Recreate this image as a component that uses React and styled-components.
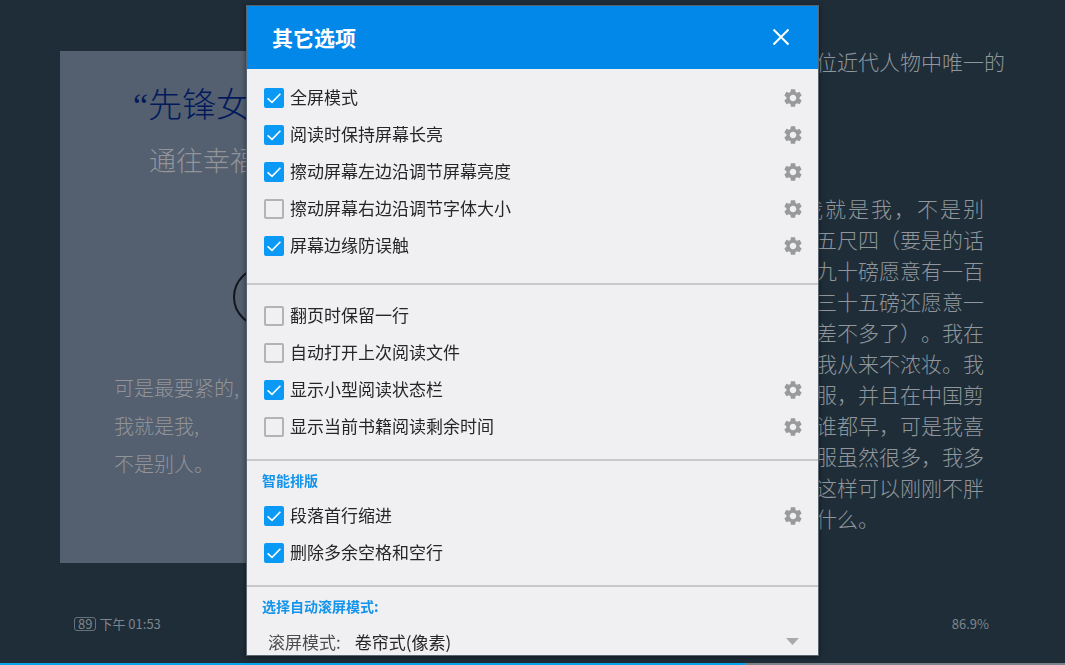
import { useState } from 'react';
import styled, { createGlobalStyle } from 'styled-components';
import { MdSettings } from 'react-icons/md';

const groups = [
    {
        top: 10,
        bottom: 19,
        options: [
            { id: 'fullscreen', label: '全屏模式', on: true, gear: true },
            { id: 'keepAwake', label: '阅读时保持屏幕长亮', on: true, gear: true },
            { id: 'leftEdge', label: '擦动屏幕左边沿调节屏幕亮度', on: true, gear: true },
            { id: 'rightEdge', label: '擦动屏幕右边沿调节字体大小', on: false, gear: true },
            { id: 'edgeGuard', label: '屏幕边缘防误触', on: true, gear: true },
        ],
    },
    {
        top: 12,
        bottom: 14,
        options: [
            { id: 'keepLine', label: '翻页时保留一行', on: false },
            { id: 'openLast', label: '自动打开上次阅读文件', on: false },
            { id: 'statusBar', label: '显示小型阅读状态栏', on: true, gear: true },
            { id: 'timeLeft', label: '显示当前书籍阅读剩余时间', on: false, gear: true },
        ],
    },
    {
        title: '智能排版',
        top: 9,
        bottom: 14,
        options: [
            { id: 'indent', label: '段落首行缩进', on: true, gear: true },
            { id: 'trim', label: '删除多余空格和空行', on: true },
        ],
    },
];

const paragraph = [
    '五尺四（要是的话',
    '九十磅愿意有一百',
    '三十五磅还愿意一',
    '差不多了）。我在',
    '我从来不浓妆。我',
    '服，并且在中国剪',
    '谁都早，可是我喜',
    '服虽然很多，我多',
    '这样可以刚刚不胖',
];

const Option = ({ id, label, on, gear }) => {
    const [checked, setChecked] = useState(on);

    return (
        <Row>
            <Label htmlFor={id}>
                <CheckWrap>
                    <Checkbox id={id} type="checkbox" checked={checked} onChange={ev => setChecked(ev.target.checked)} />
                    {checked && (
                        <CheckMark viewBox="0 0 20 20" aria-hidden="true">
                            <path d="M3.6 10.4 8 14.4 16.4 5.8" />
                        </CheckMark>
                    )}
                </CheckWrap>
                <LabelText>{label}</LabelText>
            </Label>
            {gear && (
                <GearButton type="button" aria-label={`${label}设置`}>
                    <MdSettings size={22} />
                </GearButton>
            )}
        </Row>
    )
}

const App = () => {
    return (
        <>
            <GlobalStyle />
            <Reader>
                <Pages>
                    <Cover>
                        <CoverTitle>“先锋女</CoverTitle>
                        <CoverSubtitle>通往幸福</CoverSubtitle>
                        <Ring />
                        <Quote>
                            可是最要紧的,<br />
                            我就是我,<br />
                            不是别人。
                        </Quote>
                    </Cover>
                    <TextPage>
                        <Lead>位近代人物中唯一的</Lead>
                        <Paragraph>
                            <Line $width={182}>我就是我，不是别</Line>
                            {paragraph.map(line => <Line key={line} $width={168}>{line}</Line>)}
                            <Line $width={168} $last>什么。</Line>
                        </Paragraph>
                    </TextPage>
                </Pages>
                <StatusBar>
                    <Clock><Battery>89</Battery>下午 01:53</Clock>
                    <span>86.9%</span>
                </StatusBar>
                <Progress role="progressbar" aria-label="进度" aria-valuenow={70} aria-valuemin={0} aria-valuemax={100}>
                    <ProgressFill />
                </Progress>
            </Reader>
            <Overlay>
                <Dialog role="dialog" aria-labelledby="dialog-title">
                    <Header>
                        <Title id="dialog-title">其它选项</Title>
                        <CloseButton type="button" aria-label="关闭">
                            <svg width="18" height="18" viewBox="0 0 18 18" aria-hidden="true">
                                <path d="M1.5 1.5 16.5 16.5M16.5 1.5 1.5 16.5" />
                            </svg>
                        </CloseButton>
                    </Header>
                    <Body>
                        {groups.map(group => (
                            <Group key={group.options[0].id} $top={group.top} $bottom={group.bottom}>
                                {group.title && <GroupTitle>{group.title}</GroupTitle>}
                                {group.options.map(option => <Option key={option.id} {...option} />)}
                            </Group>
                        ))}
                        <Group $top={9} $bottom={13}>
                            <GroupTitle>选择自动滚屏模式:</GroupTitle>
                            <SelectRow>
                                <SelectLabel htmlFor="scrollMode">滚屏模式:</SelectLabel>
                                <Select id="scrollMode" defaultValue="pixel">
                                    <option value="pixel">卷帘式(像素)</option>
                                </Select>
                                <Arrow width="13" height="7" viewBox="0 0 13 7" aria-hidden="true">
                                    <path d="M0 0H13L6.5 7Z" />
                                </Arrow>
                            </SelectRow>
                        </Group>
                    </Body>
                </Dialog>
            </Overlay>
        </>
    )
}

const GlobalStyle = createGlobalStyle`
    * {
        box-sizing: border-box;
    }
    body {
        margin: 0;
        background: #1e2d38;
        font-family: "Noto Sans CJK SC", sans-serif;
    }
`;

const Reader = styled.main`
    display: flex;
    flex-direction: column;
    min-height: 100vh;
    color: #90969b;
    font-weight: 300;
`;

const Pages = styled.div`
    display: grid;
    grid-template-columns: 1fr 1fr;
    align-items: start;
    flex: 1;
`;

const Cover = styled.section`
    margin: 51px 66px 0 60px;
    padding: 30px 0 80px;
    background: #545f70;
`;

const CoverTitle = styled.h1`
    margin: 0 0 12px;
    padding-left: 73px;
    color: #021a5c;
    font-family: "Liberation Serif", "Noto Sans CJK SC", serif;
    font-size: 34px;
    font-weight: 300;
    line-height: 50px;
`;

const CoverSubtitle = styled.p`
    margin: 0;
    padding-left: 89px;
    color: #929498;
    font-size: 27px;
    line-height: 34px;
`;

const Ring = styled.div`
    width: 60px;
    height: 60px;
    margin: 90px auto 42px;
    border: 2px solid #14161c;
    border-radius: 50%;
`;

const Quote = styled.p`
    margin: 0;
    padding-left: 54px;
    color: #929498;
    font-size: 20px;
    line-height: 38px;
`;

const TextPage = styled.section`
    padding: 46px 60px 0 0;
    font-size: 21px;
    line-height: 31px;
    text-spacing-trim: space-all;
    white-space: nowrap;
`;

const Lead = styled.p`
    margin: 0 0 116px;
    text-align: right;
`;

const Paragraph = styled.div`
    display: flex;
    flex-direction: column;
    align-items: flex-end;
    padding-right: 21px;
`;

const Line = styled.span`
    width: ${props => props.$width}px;
    text-align-last: ${props => props.$last ? 'left' : 'justify'};
`;

const StatusBar = styled.footer`
    display: flex;
    justify-content: space-between;
    padding: 0 76px 29px 74px;
    color: #7d868e;
    font-size: 13px;
    font-weight: 400;
    line-height: 20px;
`;

const Clock = styled.span`
    display: flex;
    align-items: center;
    gap: 3px;
`;

const Battery = styled.span`
    padding: 0 3px;
    border: 1px solid #65717a;
    border-radius: 3px;
    line-height: 12px;
`;

const Progress = styled.div`
    height: 2px;
    background: #7b848b;
`;

const ProgressFill = styled.div`
    width: 70%;
    height: 100%;
    background: #08a6ea;
`;

const Overlay = styled.div`
    position: fixed;
    inset: 0;
    display: flex;
    justify-content: center;
    padding: 6px 16px 10px;
`;

const Dialog = styled.div`
    display: flex;
    flex-direction: column;
    width: 100%;
    max-width: 571px;
    background: #f0eff2;
    box-shadow: 0 0 0 1px #59656f, 0 1px 5px 1px rgba(0, 0, 0, 0.5);
`;

const Header = styled.header`
    display: flex;
    align-items: center;
    justify-content: space-between;
    padding: 16px 24px 17px 25px;
    background: #0288e8;
    color: #fff;
`;

const Title = styled.h2`
    margin: 0;
    font-size: 21px;
    font-weight: 700;
    line-height: 30px;
`;

const CloseButton = styled.button`
    display: grid;
    place-items: center;
    width: 26px;
    height: 26px;
    padding: 0;
    border: none;
    background: transparent;
    cursor: pointer;
    path {
        fill: none;
        stroke: #fff;
        stroke-width: 2;
    }
`;

const Body = styled.div`
    flex: 1;
    min-height: 0;
    overflow-y: auto;
    scrollbar-width: none;
`;

const Group = styled.section`
    padding: ${props => props.$top}px 14px ${props => props.$bottom}px 15px;
    border-bottom: 2px solid #c8c8cb;
    &:last-child {
        border-bottom: none;
    }
`;

const GroupTitle = styled.h3`
    margin: 0 0 7px;
    color: #1494ea;
    font-size: 14px;
    font-weight: 700;
    line-height: 20px;
`;

const Row = styled.div`
    display: flex;
    align-items: center;
    justify-content: space-between;
    height: 37px;
    padding-left: 2px;
`;

const Label = styled.label`
    display: flex;
    align-items: center;
    gap: 6px;
    color: #262628;
    font-size: 17px;
    line-height: 24px;
    cursor: pointer;
`;

const LabelText = styled.span`
    padding-bottom: 2px;
`;

const CheckWrap = styled.span`
    display: grid;
    > * {
        grid-area: 1 / 1;
    }
`;

const Checkbox = styled.input`
    appearance: none;
    width: 20px;
    height: 20px;
    margin: 0;
    border: 2px solid #b3b3b5;
    border-radius: 2px;
    &:checked {
        border-color: #0a9af5;
        background: #0a9af5;
    }
`;

const CheckMark = styled.svg`
    width: 20px;
    height: 20px;
    fill: none;
    stroke: #fff;
    stroke-width: 1.6;
    pointer-events: none;
`;

const GearButton = styled.button`
    display: flex;
    padding: 0;
    border: none;
    background: transparent;
    color: #999a9c;
    cursor: pointer;
`;

const SelectRow = styled.div`
    display: flex;
    align-items: center;
    height: 37px;
    padding: 0 5px 0 6px;
    font-size: 17px;
    line-height: 24px;
`;

const SelectLabel = styled.label`
    margin-right: 14px;
    color: #4c4c4f;
`;

const Select = styled.select`
    appearance: none;
    flex: 1;
    padding: 0;
    border: none;
    background: transparent;
    color: #262628;
    font: inherit;
`;

const Arrow = styled.svg`
    fill: #a9a9ab;
    pointer-events: none;
`;

export default App;
